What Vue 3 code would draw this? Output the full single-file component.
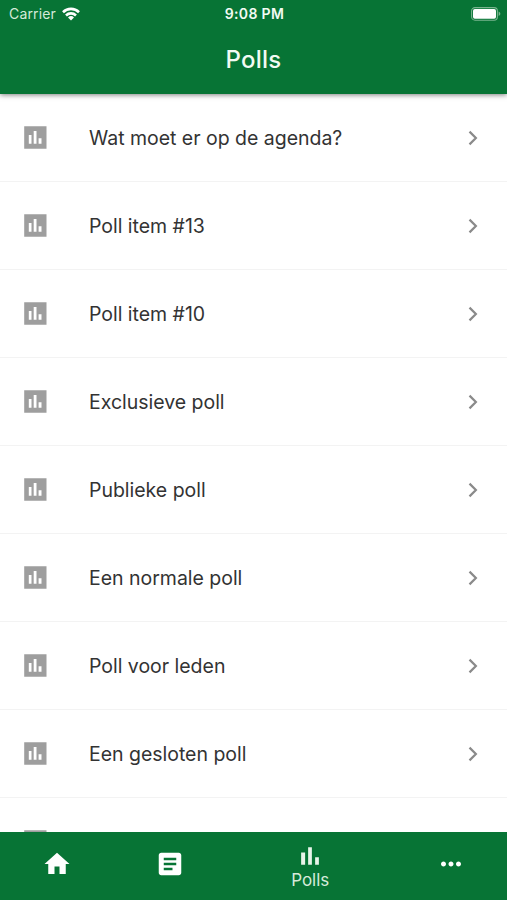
<template>
  <div class="app">
    <header class="header">
      <div class="status">
        <div class="status__left">
          <span class="carrier">Carrier</span>
          <svg class="wifi" viewBox="0 0 18 14">
            <path d="M0.1 4.3a12.6 12.6 0 0 1 17.8 0l-1.8 2a10 10 0 0 0-14.2 0z" />
            <path d="M3.1 7.5a8.4 8.4 0 0 1 11.8 0l-1.8 1.9a5.9 5.9 0 0 0-8.2 0z" />
            <path d="M6 10.5a4.3 4.3 0 0 1 6 0l-3 3.1z" />
          </svg>
        </div>
        <span class="time">9:08 PM</span>
        <div class="status__right">
          <svg class="battery" viewBox="0 0 30 14">
            <rect class="battery__case" x="0.6" y="0.6" width="25.8" height="12.6" rx="3.4" />
            <rect x="2" y="2" width="23" height="9.8" rx="1.8" />
            <path class="battery__tip" d="M27.6 4.6c2.3 0.8 2.3 3.7 0 4.5z" />
          </svg>
        </div>
      </div>
      <h1 class="title">Polls</h1>
    </header>

    <main class="list">
      <div v-for="poll in polls" :key="poll" class="item">
        <svg class="item__icon" viewBox="0 0 23 23">
          <path
            fill-rule="evenodd"
            d="M0.2 0.3h22.3v22.4H0.2zM4.8 9v8.7h2.7V9zM9.7 5v12.7h2.8V5zM14.6 12.2v5.5h2.9v-5.5z"
          />
        </svg>
        <span class="item__label">{{ poll }}</span>
        <svg class="item__arrow" viewBox="0 0 10 16">
          <path d="M1.5 1.6L7.9 8l-6.4 6.4" />
        </svg>
      </div>
    </main>

    <nav class="tabs">
      <a
        v-for="tab in tabs"
        :key="tab.name"
        class="tab"
        :class="{ 'tab--active': tab.name === active }"
        @click="active = tab.name"
      >
        <svg class="tab__icon" viewBox="0 0 24 24">
          <path :d="tab.icon" />
        </svg>
        <span v-if="tab.name === active" class="tab__label">{{ tab.name }}</span>
      </a>
    </nav>
  </div>
</template>

<script setup>
import { ref } from "vue";

const active = ref("Polls");

const polls = [
  "Wat moet er op de agenda?",
  "Poll item #13",
  "Poll item #10",
  "Exclusieve poll",
  "Publieke poll",
  "Een normale poll",
  "Poll voor leden",
  "Een gesloten poll",
  "",
];

const tabs = [
  { name: "Home", icon: "M10 20v-6h4v6h5v-8h3L12 3 2 12h3v8z" },
  {
    name: "Nieuws",
    icon: "M19 3H5c-1.1 0-2 .9-2 2v14c0 1.1.9 2 2 2h14c1.1 0 2-.9 2-2V5c0-1.1-.9-2-2-2zm-5 14H7v-2h7v2zm3-4H7v-2h10v2zm0-4H7V7h10v2z",
  },
  { name: "Polls", icon: "M4.9 9.2h3.2V19H4.9zM10.5 5h3v14h-3zm5.6 8h3v6h-3z" },
  {
    name: "Meer",
    icon: "M6 10c-1.1 0-2 .9-2 2s.9 2 2 2 2-.9 2-2-.9-2-2-2zm12 0c-1.1 0-2 .9-2 2s.9 2 2 2 2-.9 2-2-.9-2-2-2zm-6 0c-1.1 0-2 .9-2 2s.9 2 2 2 2-.9 2-2-.9-2-2-2z",
  },
];
</script>

<style>
body {
  margin: 0;
}
</style>

<style scoped>
.app {
  display: flex;
  flex-direction: column;
  height: 900px;
  overflow: hidden;
  background: #fff;
  font-family: Inter, "Liberation Sans", sans-serif;
}

.header {
  z-index: 1;
  flex: none;
  height: 94px;
  background: #077435;
  color: #f2fbf3;
  box-shadow: 0 1px 5px rgba(0, 0, 0, 0.5);
}

.status {
  display: grid;
  grid-template-columns: 1fr auto 1fr;
  align-items: center;
  height: 27px;
  padding: 0 7px 0 9px;
}

.status__left {
  display: flex;
  align-items: center;
  gap: 6px;
}

.status__right {
  display: flex;
  justify-content: flex-end;
}

.carrier {
  font-size: 14px;
  letter-spacing: 0.15px;
  color: #d5ead9;
}

.wifi {
  width: 18px;
  height: 14px;
  fill: #fff;
}

.time {
  font-size: 14px;
  font-weight: 600;
  letter-spacing: 0.35px;
}

.battery {
  width: 30px;
  height: 14px;
  margin-right: -1px;
  fill: #fff;
}

.battery__case {
  fill: none;
  stroke: #79b48e;
  stroke-width: 1.1;
}

.battery__tip {
  fill: #79b48e;
}

.title {
  margin: 0;
  font-size: 24px;
  font-weight: 500;
  letter-spacing: 0.2px;
  line-height: 66px;
  text-align: center;
}

.list {
  flex: 1;
  min-height: 0;
  overflow: hidden;
}

.item {
  display: flex;
  align-items: center;
  box-sizing: border-box;
  height: 88px;
  padding: 0 29px 0 24px;
  border-bottom: 1px solid #f3f3f3;
}

.item__icon {
  flex: none;
  width: 23px;
  height: 23px;
  margin-right: 42px;
  fill: #9e9e9e;
}

.item__label {
  flex: 1;
  font-size: 19.5px;
  letter-spacing: -0.02px;
  color: #333;
}

.item__arrow {
  width: 10px;
  height: 16px;
  fill: none;
  stroke: #8a8a8a;
  stroke-width: 2.2;
}

.tabs {
  display: flex;
  flex: none;
  height: 68px;
  background: #077435;
}

.tab {
  display: flex;
  flex: 1;
  flex-direction: column;
  align-items: center;
  padding-top: 17px;
  color: #fff;
}

.tab:first-child {
  padding-left: 1px;
}

.tab--active {
  flex: 1.5;
  padding-top: 9px;
}

.tab__icon {
  width: 30px;
  height: 30px;
  fill: currentColor;
}

.tab--active .tab__icon {
  fill: #e9f5ea;
}

.tab__label {
  font-size: 17px;
  line-height: 19px;
  color: #d5ead9;
}
</style>
